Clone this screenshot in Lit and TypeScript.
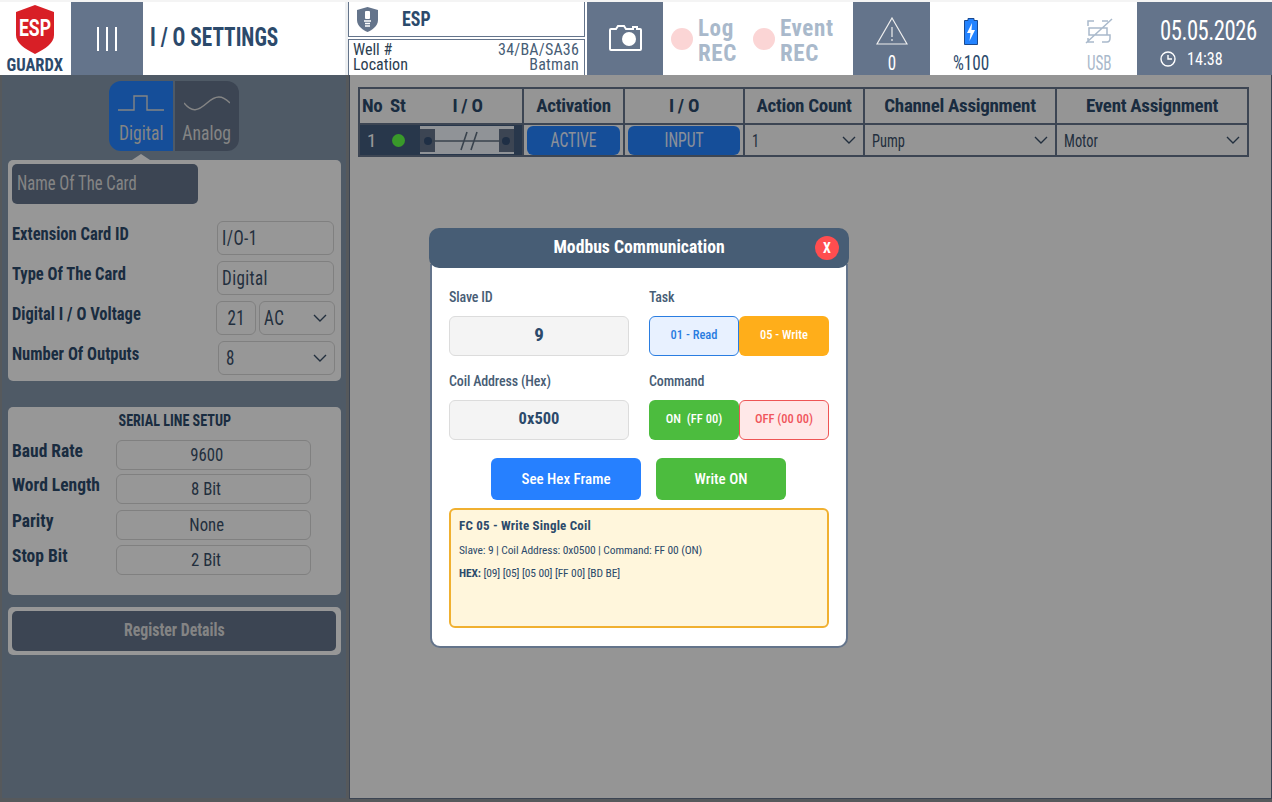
import { LitElement, html, css } from "lit";
import { customElement } from "lit/decorators.js";

const chev = html`<svg class="chev" width="14" height="8" viewBox="0 0 14 8"><path d="M1 1l6 6 6-6" fill="none" stroke="currentColor" stroke-width="1.4"/></svg>`;
const n = (t: string) => html`<span class="n">${t}</span>`;

@customElement("app-root")
export class AppRoot extends LitElement {
  static styles = css`
    :host { display: block; width: 1272px; height: 802px; position: relative; overflow: hidden; background: #8f949a;
      font-family: "Liberation Sans Narrow", "Roboto Condensed", Roboto, sans-serif; color: #2c4a6b; }
    * { box-sizing: border-box; }
    .n { display: inline-block; white-space: nowrap; transform: scaleX(var(--sx, .85)); transform-origin: var(--so, left) center; }
    .top { display: flex; height: 73px; position: absolute; top: 2px; left: 0; width: 1272px; background: #fff; }
    .top > * { flex: none; }
    .strip { height: 2px; background: #f4f4f4; }
    .w { background: #fff; }
    .s { background: #64748b; color: #fff; }
    .logo { width: 71px; display: flex; flex-direction: column; align-items: center; padding-top: 3px; }
    .logo svg { margin-left: -1px; overflow: visible; }
    .logo b { font-size: 18px; line-height: 20px; margin-top: 1px; --sx: .92; --so: center; margin-left: -2px; }
    .menu { width: 72px; display: flex; align-items: center; justify-content: center; gap: 7px; }
    .menu i { width: 2px; height: 24px; background: #fff; }
    .title { width: 205px; border-right: 3px solid #eef0f2; font-size: 25px; font-weight: 700; display: flex; align-items: center; padding-left: 7px; padding-bottom: 2px; --sx: .85; }
    .dev { width: 237px; margin-right: 2px; display: flex; flex-direction: column; gap: 2px; }
    .dev1 { height: 35px; display: flex; align-items: center; gap: 24px; padding-left: 8px; font-size: 21px; font-weight: 700; border: 1px solid #64748b; border-top: 0; --sx: .85; }
    .dev2 { flex: 1; display: grid; grid-template-columns: auto 1fr; align-content: start; padding: 2px 5px 0 4px; font-size: 16px; line-height: 15px; color: #2c3e50; border: 1px solid #64748b; border-bottom: 0; }
    .dev2 span:nth-child(even) { text-align: right; color: #475d75; letter-spacing: .2px; }
    .cam { width: 76px; margin-right: 3px; display: flex; align-items: center; justify-content: center; padding-bottom: 1px; }
    .rec { width: 185px; margin-right: 2px; display: flex; padding-left: 5px; color: #a9b9cb; font-weight: 700; font-size: 23px; line-height: 25px; align-items: center; }
    .rec div { display: flex; align-items: center; gap: 5px; width: 82px; padding-top: 1px; letter-spacing: .6px; }
    .rec span { padding-top: 4px; }
    .rec i { width: 22px; height: 22px; border-radius: 50%; background: #fbd5d5; }
    .alert { width: 77px; margin-right: 3px; display: flex; flex-direction: column; align-items: center; justify-content: flex-end; font-size: 20px; line-height: 24px; gap: 6px; --sx: .85; --so: center; }
    .status { width: 204px; display: flex; font-size: 20px; color: #2c4a6b; --so: center; }
    .status div { display: flex; flex-direction: column; align-items: center; justify-content: flex-end; line-height: 24px; gap: 6px; }
    .status .a { width: 76px; margin-right: 52px; --sx: .86; }
    .status .b { width: 76px; color: #a9b9cb; --sx: .76; }
    .date { width: 135px; padding: 14px 0 0 23px; font-size: 28px; line-height: 30px; letter-spacing: -.6px; --sx: .81; white-space: nowrap; }
    .time { display: flex; align-items: center; gap: 11px; font-size: 19px; line-height: 20px; letter-spacing: 0; padding-top: 3px; --sx: .85; }

    .side { position: absolute; left: 2px; top: 75px; width: 344px; height: 723px; background: #8496aa; padding: 0 0 0 6px; }
    .tgl { display: flex; width: 130px; height: 70px; margin: 6px 0 0 101px; border-radius: 12px; overflow: hidden; }
    .tgl div { flex: 1; display: flex; flex-direction: column; align-items: center; font-size: 20px; line-height: 22px; color: #ddd; gap: 9px; padding-top: 14px; --so: center; --sx: .88; }
    .tgl .act { background: #2383ff; flex: 0 0 64px; margin-right: 2px; }
    .tgl .off { background: #64748b; }
    .caret { position: absolute; left: 130px; top: 79px; border: 6px solid transparent; border-top: 0; border-left-width: 9px; border-right-width: 9px; border-bottom-color: #fcfcfc; }
    .card { width: 333px; background: #fcfcfc; border-radius: 5px; }
    .c1 { margin-top: 9px; height: 221px; padding: 4px 6px 4px 4px; }
    .name { width: 186px; height: 40px; border-radius: 5px; background: #64748b; color: #ddd; font-size: 21px; line-height: 38px; padding-left: 5px; margin-bottom: 17px; --sx: .79; }
    .r { display: flex; height: 34px; margin-bottom: 6px; align-items: flex-start; font-size: 19px; font-weight: 700; --sx: .87; }
    .r > span { flex: 1; line-height: 24px; padding-top: 1px; white-space: nowrap; }
    .f { border: 1px solid #d5d5d5; border-radius: 6px; height: 34px; font-size: 20px; font-weight: 400; color: #3a4f68; padding-left: 4px; display: flex; align-items: center; justify-content: space-between; letter-spacing: .5px; --sx: .85; }
    .f117 { width: 117px; margin-right: 1px; }
    .f8 { width: 117px; padding-left: 7px; }
    .f21 { width: 40px; justify-content: center; padding: 0; margin-right: 3px; --so: center; }
    .fac { width: 76px; }
    .chev { color: #3a4f68; margin-right: 7px; flex: none; }
    .c2 { margin-top: 26px; height: 188px; padding: 3px 4px 4px; }
    .c2 h3 { margin: 0; text-align: center; font-size: 17px; line-height: 20px; font-weight: 700; margin-bottom: 10px; --sx: .83; --so: center; }
    .q { display: flex; font-size: 19px; font-weight: 700; height: 30px; margin-bottom: 4px; --sx: .92; }
    .q > span { width: 104px; line-height: 21px; white-space: nowrap; }
    .q .f { width: 195px; height: 30px; justify-content: center; font-size: 19px; padding: 0 14px 2px 0; letter-spacing: 0; --sx: .88; --so: center; }
    .q.gap { margin-bottom: 6px; }
    .q.gap5 { margin-bottom: 5px; }
    .c3 { margin-top: 12px; height: 48px; padding: 4px 5px 4px 4px; }
    .reg { height: 40px; border-radius: 5px; background: #64748b; color: #ddd; display: flex; align-items: center; justify-content: center; font-size: 18px; font-weight: 700; padding-bottom: 3px; --sx: .88; --so: center; }

    .main { position: absolute; left: 349px; top: 75px; width: 923px; height: 724px; background: #f9f9f9; border-right: 1px solid #64748b; border-bottom: 1px solid #64748b; border-left: 1px solid #64748b; padding: 12px 0 0 8px; }
    .tb { display: grid; grid-template-columns: 164px 101px 120px 120px 192px 190px; width: 891px; border: 2px solid #64748b; }
    .tb > div { height: 36px; border-right: 2px solid #64748b; border-bottom: 2px solid #64748b; display: flex; align-items: center; justify-content: center; font-size: 19px; font-weight: 700; color: #2c4a6b; letter-spacing: -.3px; padding-bottom: 1px; }
    .tb > div.last { border-right: 0; }
    .tb > div.rw { height: 30px; border-bottom: 0; font-weight: 400; padding-bottom: 0; }
    .tb > div.hd0 { justify-content: flex-start; padding-left: 2px; }
    .hd0 span:nth-child(1) { width: 28px; }
    .hd0 span:nth-child(2) { width: 31px; }
    .hd0 span:nth-child(3) { width: 93px; text-align: center; }
    .tb > div.no { background: #445d7e; color: #fff; justify-content: flex-start; padding-left: 7px; gap: 16px; }
    .no i { width: 13px; height: 13px; border-radius: 50%; background: #5fff46; margin-right: -1px; flex: none; }
    .sw { width: 94px; height: 28px; flex: none; }
    .pill { background: #2383ff; color: #e8f0ff; width: 93px; height: 29px; border-radius: 6px; display: flex; align-items: center; justify-content: center; font-size: 20px; letter-spacing: 0; font-weight: 400; --sx: .78; --so: center; }
    .pill.wide { width: 112px; }
    .tb > div.sel { justify-content: space-between; padding-left: 7px; font-size: 18px; color: #3a4f68; --sx: .8; letter-spacing: 0; }
    .sel .chev { margin-right: 7px; }

    .ov { position: absolute; left: 0; top: 75px; width: 1272px; height: 727px; background: rgba(0,0,0,.4); }
    .modal { position: absolute; left: 429px; top: 228px; width: 420px; height: 420px; }
    .mh { height: 40px; border-radius: 10px; background: #475d75; color: #fff; display: flex; align-items: center; justify-content: center; font-size: 19px; font-weight: 700; padding-bottom: 3px; --sx: .93; --so: center; position: relative; z-index: 1; }
    .x { position: absolute; right: 10px; top: 8px; width: 24px; height: 24px; border-radius: 50%; background: #ff4d4f; font-size: 14px; display: flex; align-items: center; justify-content: center; }
    .mb { height: 384px; margin: -4px 1px 0; background: #fff; border: 2px solid #64748b; border-top: 0; border-radius: 0 0 10px 10px; padding: 23px 17px 0 17px; }
    .g { display: grid; grid-template-columns: 180px 180px; column-gap: 20px; }
    .l { font-size: 14px; font-weight: 500; color: #475d75; line-height: 20px; height: 29px; letter-spacing: -.15px; }
    .inp { height: 40px; background: #f4f4f4; border: 1px solid #dcdcdc; border-radius: 6px; display: flex; align-items: center; justify-content: center; font-size: 16.5px; font-weight: 700; color: #2c4a6b; margin-bottom: 15px; padding-bottom: 3px; }
    .inp.big { font-size: 19px; }
    .two { display: flex; height: 40px; font-size: 12.5px; font-weight: 500; }
    .two div { flex: 0 0 90px; border-radius: 6px; display: flex; align-items: center; justify-content: center; padding-bottom: 3px; }
    .rd { background: #e8f1ff; border: 1px solid #2a7de1; color: #2a7de1; }
    .wr { background: #ffae1a; color: #fff; }
    .cmdon { background: #4cbc3e; color: #fff; }
    .of { background: #ffe8e8; border: 1px solid #e55; color: #f0565c; }
    .btns { display: flex; gap: 15px; margin: 3px 0 8px 42px; }
    .btns div { height: 42px; border-radius: 6px; color: #fff; display: flex; align-items: center; justify-content: center; font-size: 15px; font-weight: 500; padding-bottom: 1px; }
    .b1 { width: 150px; background: #2680ff; }
    .b2 { width: 130px; background: #4cbc3e; }
    .info { height: 120px; border: 2px solid #f0b030; border-radius: 6px; background: #fff6dc; padding: 7px 8px; font-size: 11.5px; letter-spacing: -.1px; color: #2c4a6b; line-height: 17px; }
    .info p { margin: 0 0 6px; }
    .info .bh { font-size: 13px; font-weight: 700; letter-spacing: .2px; margin-bottom: 8px; }
  `;

  render() {
    return html`
      <div class="strip"></div>
      <div class="side">
        <div class="tgl">
          <div class="act"><svg width="46" height="18" viewBox="0 0 46 18"><path d="M0 15H16V1H29V15H46" fill="none" stroke="#ddd" stroke-width="1.4"/></svg>${n("Digital")}</div>
          <div class="off"><svg width="46" height="18" viewBox="0 0 46 18"><path d="M0 8C8 18 14 16 23 8S38 0 46 8" fill="none" stroke="#ddd" stroke-width="1.4"/></svg>${n("Analog")}</div>
        </div>
        <div class="caret"></div>
        <div class="card c1">
          <div class="name">${n("Name Of The Card")}</div>
          <div class="r"><span>${n("Extension Card ID")}</span><div class="f f117">${n("I/O-1")}</div></div>
          <div class="r"><span>${n("Type Of The Card")}</span><div class="f f117">${n("Digital")}</div></div>
          <div class="r"><span>${n("Digital I / O Voltage")}</span><div class="f f21">${n("21")}</div><div class="f fac">${n("AC")}${chev}</div></div>
          <div class="r"><span>${n("Number Of Outputs")}</span><div class="f f8">${n("8")}${chev}</div></div>
        </div>
        <div class="card c2">
          <h3>${n("SERIAL LINE SETUP")}</h3>
          <div class="q"><span>${n("Baud Rate")}</span><div class="f">${n("9600")}</div></div>
          <div class="q gap"><span>${n("Word Length")}</span><div class="f">${n("8 Bit")}</div></div>
          <div class="q gap5"><span>${n("Parity")}</span><div class="f">${n("None")}</div></div>
          <div class="q"><span>${n("Stop Bit")}</span><div class="f">${n("2 Bit")}</div></div>
        </div>
        <div class="card c3"><div class="reg">${n("Register Details")}</div></div>
      </div>
      <div class="main">
        <div class="tb">
          <div class="hd0"><span>No</span><span>St</span><span>I / O</span></div>
          <div>Activation</div><div>I / O</div><div>Action Count</div><div>Channel Assignment</div><div class="last">Event Assignment</div>
          <div class="rw no">1<i></i>
            <svg class="sw" viewBox="0 0 94 28"><rect width="94" height="28" fill="#f0f6fc"/><rect width="15" height="23" y="3" fill="#64748b"/><rect x="79" width="15" height="23" y="3" fill="#64748b"/><circle cx="8" cy="15" r="4" fill="#344f73"/><circle cx="86" cy="15" r="4" fill="#344f73"/><path d="M12 15H80M41 24L47 6M51 24L57 6" stroke="#5f6f80" stroke-width="1.6" fill="none"/></svg>
          </div>
          <div class="rw"><div class="pill">${n("ACTIVE")}</div></div>
          <div class="rw"><div class="pill wide">${n("INPUT")}</div></div>
          <div class="rw sel">${n("1")}${chev}</div>
          <div class="rw sel">${n("Pump")}${chev}</div>
          <div class="rw sel last">${n("Motor")}${chev}</div>
        </div>
      </div>
      <div class="ov"></div>
      <div class="top">
        <div class="logo w">
          <svg width="40" height="49" viewBox="0 0 40 49"><path d="M20 0L39 7V30C39 38 30 44 20 49C10 44 1 38 1 30V7Z" fill="#d81f26"/><text x="20" y="31" text-anchor="middle" fill="#fff" font-size="24" font-weight="700" font-family="Roboto, sans-serif" textLength="32" lengthAdjust="spacingAndGlyphs">ESP</text></svg>
          <b>${n("GUARDX")}</b>
        </div>
        <div class="menu s"><i></i><i></i><i></i></div>
        <div class="title w">${n("I / O SETTINGS")}</div>
        <div class="dev">
          <div class="dev1 w"><svg width="21" height="25" viewBox="0 0 21 25"><path d="M10.500 0L21 3V13C21 19 15 23 10.500 25C6 23 0 19 0 13V3Z" fill="#64748b"/><rect x="8" y="4" width="5" height="8" rx="1" fill="#fff"/><path d="M7 14H14M8 16.500H13M8 19H13" stroke="#fff" stroke-width="1.400"/></svg>${n("ESP")}</div>
          <div class="dev2 w"><span>Well #</span><span>34/BA/SA36</span><span>Location</span><span>Batman</span></div>
        </div>
        <div class="cam s"><svg width="33" height="28" viewBox="0 0 33 28"><path d="M2 5H7L9 2H15L17 5H24V3H28V5H31A1 1 0 0 1 32 6V25A1 1 0 0 1 31 26H2A1 1 0 0 1 1 25V6A1 1 0 0 1 2 5Z" fill="none" stroke="#fff" stroke-width="2"/><circle cx="20" cy="15" r="7" fill="#fff"/></svg></div>
        <div class="rec w"><div><i></i><span>Log<br/>REC</span></div><div><i></i><span>Event<br/>REC</span></div></div>
        <div class="alert s"><svg width="32" height="28" viewBox="0 0 32 28"><path d="M16 1L31 27H1Z" fill="none" stroke="#eee" stroke-width="1.2"/><path d="M16 10V20M16 22V24" stroke="#eee" stroke-width="1.2"/></svg>${n("0")}</div>
        <div class="status w">
          <div class="a"><svg width="14" height="27" viewBox="0 0 14 27"><path d="M4 .5H10V2.500H13.500V26.500H.5V2.500H4Z" fill="#2383ff" stroke="#1a4a90"/><path d="M8 5L3 15H6.500L5.500 23L11 12H7.500Z" fill="#fff"/></svg>${n("%100")}</div>
          <div class="b"><svg width="28" height="27" viewBox="0 0 28 27"><path d="M3 8V3H9M17 3H23M3 20V24H9M17 24H22Q25 24 25 20V17H4V10H22V17M1 25L27 1" fill="none" stroke="#a9b9cb" stroke-width="1.500"/></svg>${n("USB")}</div>
        </div>
        <div class="date s">${n("05.05.2026")}
          <div class="time"><svg width="16" height="16" viewBox="0 0 16 16"><circle cx="8" cy="8" r="7" fill="none" stroke="#fff" stroke-width="1.400"/><path d="M8 4V8H12" fill="none" stroke="#fff" stroke-width="1.400"/></svg>${n("14:38")}</div>
        </div>
      </div>
      <div class="modal">
        <div class="mh">${n("Modbus Communication")}<div class="x">X</div></div>
        <div class="mb">
          <div class="g">
            <div><div class="l">Slave ID</div><div class="inp big">9</div></div>
            <div><div class="l">Task</div><div class="two"><div class="rd">01 - Read</div><div class="wr">05 - Write</div></div></div>
            <div><div class="l">Coil Address (Hex)</div><div class="inp">0x500</div></div>
            <div><div class="l">Command</div><div class="two"><div class="cmdon">ON&nbsp; (FF 00)</div><div class="of">OFF (00 00)</div></div></div>
          </div>
          <div class="btns"><div class="b1">See Hex Frame</div><div class="b2">Write ON</div></div>
          <div class="info">
            <p class="bh">FC 05 - Write Single Coil</p>
            <p>Slave: 9 | Coil Address: 0x0500 | Command: FF 00 (ON)</p>
            <p><b>HEX:</b> [09] [05] [05 00] [FF 00] [BD BE]</p>
          </div>
        </div>
      </div>
    `;
  }
}
